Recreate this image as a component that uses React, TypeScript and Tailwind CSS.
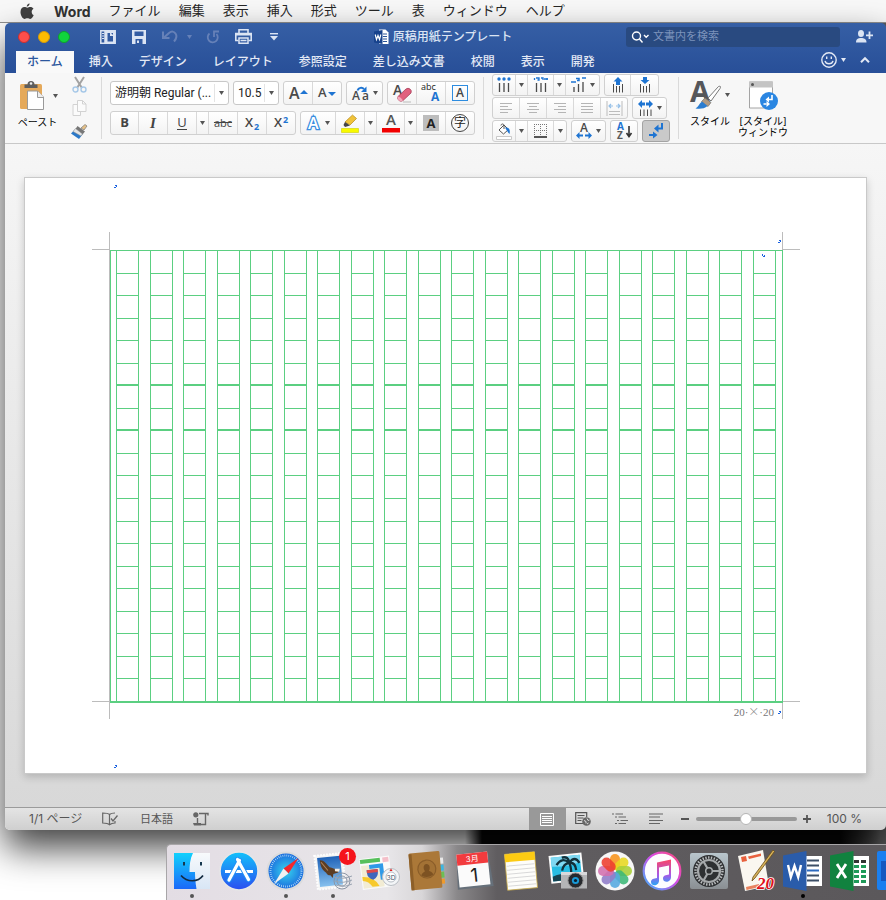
import React from "react";

type Kids = { children?: React.ReactNode };

function Svg({ w, h, className = "", children }: { w: number; h: number; className?: string } & Kids) {
  return (
    <svg width={w} height={h} viewBox={`0 0 ${w} ${h}`} className={`block shrink-0 overflow-visible ${className}`} fill="none" aria-hidden="true">
      {children}
    </svg>
  );
}

function Caret({ className = "text-[#555]" }: { className?: string }) {
  return (
    <Svg w={5} h={4} className={className}>
      <path d="M0 0h5L2.500 4z" fill="currentColor" />
    </Svg>
  );
}

function Letter({ x, y, size, fill = "#4a4a4a", weight = 600, children }: { x: number; y: number; size: number; fill?: string; weight?: number } & Kids) {
  return (
    <text x={x} y={y} fontSize={size} fontWeight={weight} fontFamily="Open Sans, sans-serif" fill={fill}>
      {children}
    </text>
  );
}

/* ---------- menu bar ---------- */

const menus = ["ファイル", "編集", "表示", "挿入", "形式", "ツール", "表", "ウィンドウ", "ヘルプ"];

function MenuBar() {
  return (
    <nav className="flex h-[23px] shrink-0 items-center border-b border-[#8f8f8f] bg-[#f8f8f8] pl-[20px] text-[13px] text-[#262626]">
      <button aria-label="Apple">
        <Svg w={14} h={17}>
          <path d="M9.600 0.600C9.700 2 8.500 3.700 6.800 3.800 6.600 2.300 8 .800 9.600.600zM11.700 8.700c0-1.500.900-2.400 1.800-3C12.800 4.600 11.600 4.100 10.400 4.100c-1.300 0-2.200.700-3 .700-.900 0-1.800-.700-2.900-.700C2.300 4.100.500 6 .500 9c0 3.300 2.200 7 4.100 7 .900 0 1.500-.700 2.800-.700s1.700.700 2.800.700c1.600 0 3-2.300 3.500-3.900-1.200-.500-2-1.700-2-3.400z" fill="#404040" />
        </Svg>
      </button>
      <button className="ml-[20px] text-[14px] font-bold text-[#333]">Word</button>
      <div className="ml-[18px] flex gap-[18px]">
        {menus.map((m) => (
          <button key={m} className="whitespace-nowrap">{m}</button>
        ))}
      </div>
    </nav>
  );
}

/* ---------- title bar ---------- */

function TitleBar() {
  return (
    <div className="flex h-[27px] items-center pl-[13px] pr-[13px] text-[#dbe4f3]">
      <div className="flex gap-[8px]">
        <button aria-label="閉じる" className="size-[12px] rounded-full border border-[#c93030] bg-[#fd4e4b]" />
        <button aria-label="しまう" className="size-[12px] rounded-full border border-[#d49a0b] bg-[#fdbc02]" />
        <button aria-label="拡大" className="size-[12px] rounded-full border border-[#0fa02c] bg-[#10d43c]" />
      </div>
      <div className="ml-[30px] flex items-center">
        <button aria-label="サイドバー">
          <Svg w={16} h={14}>
            <path d="M.800.800h14.400v12.400H.800zM5 1v12" stroke="currentColor" strokeWidth="1.500" />
            <path d="M2 3.500h2M2 6h2M2 8.500h2" stroke="currentColor" />
            <path d="M5 1h2.500v12H5zM7 1h8v2H7zM13 3h2v10h-2zM7 11.500h8V13H7z" fill="currentColor" />
            <path d="M10 2v4h4z" fill="currentColor" />
          </Svg>
        </button>
        <button aria-label="保存" className="ml-[16px]">
          <Svg w={14} h={14}>
            <path d="M0 0h14v14H0zM2.500 1.500v4.500h9V1.500zM3.500 9v5h7V9z" fill="currentColor" fillRule="evenodd" />
            <path d="M5 10.500h2v2.500H5z" fill="currentColor" />
          </Svg>
        </button>
        <button aria-label="元に戻す" className="ml-[16px] flex items-center gap-[9px] text-[#6681b8]">
          <Svg w={16} h={13}>
            <path d="M1 1.500v6.500h6.500" stroke="currentColor" strokeWidth="2" />
            <path d="M2 7.500 7 3q4-3 6.500.500t-1.500 8" stroke="currentColor" strokeWidth="2" />
          </Svg>
          <Caret className="text-[#6681b8]" />
        </button>
        <button aria-label="やり直し" className="ml-[14px] text-[#6681b8]">
          <Svg w={14} h={14}>
            <path d="M3.500 3.500A5 5 0 1 0 10.500 4" stroke="currentColor" strokeWidth="1.800" />
            <path d="M8 7V1.500h5" stroke="currentColor" strokeWidth="1.800" />
          </Svg>
        </button>
        <button aria-label="印刷" className="ml-[15px]">
          <Svg w={17} h={15}>
            <path d="M4 4V.800h9V4M3.500 11.500H.800V4.500h15.400v7h-2.700" stroke="currentColor" strokeWidth="1.600" />
            <path d="M4 9h9v5.200H4zM5.500 11.500h6" stroke="currentColor" strokeWidth="1.500" />
            <path d="M1 5.500h15" stroke="currentColor" strokeWidth="2" />
          </Svg>
        </button>
        <button aria-label="ツールバーのカスタマイズ" className="ml-[18px]">
          <Svg w={8} h={8}>
            <path d="M0 .700h8" stroke="currentColor" strokeWidth="1.400" />
            <path d="M0 3h8L4 7.500z" fill="currentColor" />
          </Svg>
        </button>
      </div>
      <div className="flex min-w-0 flex-1 items-center justify-center gap-[4px] pr-[18px]">
        <Svg w={15} h={16}>
          <path d="M5 .500h6.500l3 3V15H5z" fill="#fff" />
          <path d="M9 5h4M9 7.500h4M9 10h4M9 12.500h4" stroke="#2a5599" />
          <path d="M0 2.500 8.500 1v14L0 13.500z" fill="#17428c" />
          <path d="m1.200 5.500 1.300 5 1.500-4 1.500 4 1.300-5" stroke="#fff" strokeWidth="1.200" />
        </Svg>
        <h1 className="whitespace-nowrap text-[12px] font-medium">原稿用紙テンプレート</h1>
      </div>
      <label className="mr-[16px] flex h-[20px] w-[214px] items-center gap-[4px] rounded-[3px] bg-[#294a80] px-[5px]">
        <Svg w={18} h={12}>
          <circle cx="5.500" cy="5" r="4" stroke="#fff" strokeWidth="1.400" />
          <path d="m8.500 8 3 3.500M13 4l2.200 2.200L17.500 4" stroke="#fff" strokeWidth="1.400" />
        </Svg>
        <input aria-label="文書内を検索" placeholder="文書内を検索" className="min-w-0 flex-1 bg-transparent text-[11px] outline-none placeholder:text-[#7d93bb]" />
      </label>
      <button aria-label="共有">
        <Svg w={17} h={13}>
          <ellipse cx="5" cy="3.500" rx="3" ry="3.500" fill="currentColor" />
          <path d="M0 12.500C0 9 2 8 5 8s5.500 1 5.500 4.500z" fill="currentColor" />
          <path d="M13.500 1.500v7.500M10 5.300h7" stroke="currentColor" strokeWidth="1.800" />
        </Svg>
      </button>
    </div>
  );
}

const tabs = ["挿入", "デザイン", "レイアウト", "参照設定", "差し込み文書", "校閲", "表示", "開発"];

function Tabs() {
  return (
    <div className="flex h-[23px] items-end pl-[11px] pr-[16px] text-[12px] font-medium text-[#e3e9f5]">
      <button className="mr-[2px] h-[22px] whitespace-nowrap bg-[#f9f9f9] px-[11px] text-[#2c579d]">ホーム</button>
      {tabs.map((t) => (
        <button key={t} className="h-[22px] whitespace-nowrap px-[13px]">{t}</button>
      ))}
      <div className="ml-auto flex h-full items-center gap-[14px] pb-[4px]">
        <button aria-label="フィードバック" className="flex items-center gap-[4px]">
          <Svg w={16} h={16}>
            <circle cx="8" cy="8" r="7.200" stroke="currentColor" strokeWidth="1.400" />
            <path d="M5.700 4.500v2.500M10.300 4.500v2.500M4 8.800c1 4 7 4 8 0" stroke="currentColor" strokeWidth="1.400" />
          </Svg>
          <Caret className="text-[#e3e9f5]" />
        </button>
        <button aria-label="リボンを折りたたむ">
          <Svg w={10} h={6}>
            <path d="m1 5.200 4-4 4 4" stroke="currentColor" strokeWidth="2" />
          </Svg>
        </button>
      </div>
    </div>
  );
}

/* ---------- ribbon ---------- */

function Group({ children, className = "h-[24px]" }: { className?: string } & Kids) {
  return (
    <div className={`flex shrink-0 divide-x divide-[#d9d9d9] rounded-[3px] border border-[#d0d0d0] bg-linear-to-b from-white to-[#f3f3f3] ${className}`}>
      {children}
    </div>
  );
}

function Btn({ label, w, children }: { label: string; w: string } & Kids) {
  return (
    <button aria-label={label} className={`flex h-full shrink-0 items-center justify-center gap-[4px] ${w}`}>
      {children}
    </button>
  );
}

function Drop() {
  return (
    <Btn label="オプション" w="w-[12px]">
      <Caret />
    </Btn>
  );
}

function Combo({ label, value, w }: { label: string; value: string; w: string }) {
  return (
    <div className={`relative h-[24px] shrink-0 rounded-[3px] border border-[#c8c8c8] bg-white ${w}`}>
      <select aria-label={label} className="block h-[22px] w-full appearance-none whitespace-nowrap bg-transparent pl-[4px] font-['Roboto','Noto_Sans_CJK_JP',sans-serif] text-[12px] leading-[22px] text-[#222] outline-none">
        <option>{value}</option>
      </select>
      <span className="pointer-events-none absolute inset-y-[2px] right-0 flex w-[14px] items-center justify-center border-l border-[#e4e4e4]">
        <Caret />
      </span>
    </div>
  );
}

function Rule() {
  return <div className="h-[62px] w-px shrink-0 bg-[#dadada]" />;
}

function Clipboard() {
  return (
    <div className="flex shrink-0">
      <div className="w-[46px]">
        <button className="flex flex-col gap-[4px] pt-[3px]">
          <span className="flex items-center gap-[8px] pl-[3px]">
            <Svg w={25} h={31}>
              <rect x="0" y="4" width="22" height="25" rx="1.500" fill="#e5a95a" />
              <path d="M4.500 8V4.500h3a3.500 3.500 0 0 1 7 0h3V8z" fill="#5d5d5d" />
              <circle cx="11" cy="3.500" r="1.300" fill="#eee" />
              <path d="M7.500 11h10l6 6v12.500h-16z" fill="#fff" stroke="#9a9a9a" />
              <path d="M17.500 11v6.500H24" stroke="#9a9a9a" fill="#eee" />
            </Svg>
            <Caret />
          </span>
          <span className="whitespace-nowrap text-[10px] leading-[14px] text-black">ペースト</span>
        </button>
      </div>
      <div className="flex w-[32px] flex-col items-center gap-[7px]">
        <button aria-label="カット">
          <Svg w={15} h={16}>
            <path d="m3 0 7 11M12 0 5 11" stroke="#a2a2a2" strokeWidth="2" />
            <circle cx="3.500" cy="12.500" r="2.500" stroke="#a6c8e8" strokeWidth="1.400" />
            <circle cx="11.500" cy="12.500" r="2.500" stroke="#a6c8e8" strokeWidth="1.400" />
          </Svg>
        </button>
        <button aria-label="コピー">
          <Svg w={15} h={16}>
            <path d="M1 4.500h4.500L8.500 8v7.500H1z" fill="#fbfbfb" stroke="#d2d2d2" />
            <path d="M5.500.500h5l3.500 3.500v7.500H5.500z" fill="#fbfbfb" stroke="#d2d2d2" />
            <path d="M10.500.500V4H14" stroke="#d2d2d2" />
          </Svg>
        </button>
        <button aria-label="書式のコピー">
          <Svg w={16} h={16}>
            <path d="m10 5 4-3.500L16 3l-3 4z" fill="#e6c188" stroke="#777" strokeWidth=".700" />
            <path d="m6.500 3 7.500 5.500-2.500 3-7-5.500z" fill="#777" />
            <path d="m4.500 6 7 5.500L8 16 0 10.500z" fill="#2a78c8" />
            <path d="m4.500 5.500 7 5.500-1.500 2-8-4.500z" fill="#e4e4e4" stroke="#888" strokeWidth=".500" />
          </Svg>
        </button>
      </div>
    </div>
  );
}

function FontGroup() {
  return (
    <div className="flex shrink-0 flex-col gap-[6px]">
      <div className="flex gap-[4px]">
        <Combo label="フォント" value="游明朝 Regular (..." w="w-[119px]" />
        <Combo label="フォント サイズ" value="10.5" w="w-[46px]" />
        <Group>
          <Btn label="フォントの拡大" w="w-[29px]">
            <Svg w={20} h={15}>
              <Letter x={1} y={13} size={16}>A</Letter>
              <path d="M12 8h8L16 4z" fill="#1e74d2" />
            </Svg>
          </Btn>
          <Btn label="フォントの縮小" w="w-[28px]">
            <Svg w={18} h={14}>
              <Letter x={0} y={11} size={13}>A</Letter>
              <path d="M10 6h8l-4 4z" fill="#1e74d2" />
            </Svg>
          </Btn>
        </Group>
        <Group>
          <Btn label="文字種の変換" w="w-[35px]">
            <Svg w={17} h={15}>
              <Letter x={0} y={14} size={12}>A</Letter>
              <Letter x={10} y={14} size={12}>a</Letter>
              <path d="M5.500 4.500C6.500 1.500 10 1 12 3" stroke="#1e74d2" strokeWidth="2" />
              <path d="M14.500.500v5.500H9z" fill="#1e74d2" />
            </Svg>
            <Caret />
          </Btn>
        </Group>
        <Group>
          <Btn label="書式のクリア" w="w-[29px]">
            <Svg w={21} h={19}>
              <Letter x={1} y={11} size={14}>A</Letter>
              <path d="M6 12.500 14 5q2-1.500 4 0t1 4l-8 7.500q-2 1.500-4 0t-1-4z" fill="#e0607e" stroke="#a63d58" strokeWidth=".800" />
              <path d="M6 12.500q3 .500 5 4-2 1.500-4 0t-1-4z" fill="#f4a9bb" />
              <path d="M11 18h8" stroke="#bbb" />
            </Svg>
          </Btn>
          <Btn label="ルビ" w="w-[29px]">
            <Svg w={20} h={20}>
              <Letter x={0} y={7} size={9} fill="#222" weight={400}>abc</Letter>
              <Letter x={10} y={18} size={12} fill="#1e74d2" weight={700}>A</Letter>
            </Svg>
          </Btn>
          <Btn label="囲み線" w="w-[28px]">
            <span className="flex size-[16px] items-center justify-center border border-[#2d8ce0] font-['Open_Sans',sans-serif] text-[12px] font-semibold leading-[14px] text-[#444]">A</span>
          </Btn>
        </Group>
      </div>
      <div className="flex gap-[4px] font-['Open_Sans','Noto_Sans_CJK_JP',sans-serif] text-[13px] text-[#444]">
        <Group>
          <Btn label="太字" w="w-[28px]"><b className="font-bold">B</b></Btn>
          <Btn label="斜体" w="w-[29px]"><i className="font-['Liberation_Serif',serif] text-[15px] font-bold">I</i></Btn>
          <Btn label="下線" w="w-[29px]"><span className="border-b border-[#444] leading-[13px]">U</span></Btn>
          <Drop />
          <Btn label="取り消し線" w="w-[29px]"><s className="text-[11px]">abc</s></Btn>
          <Btn label="下付き" w="w-[29px]"><span className="font-semibold">X<sub className="pl-px text-[9px] font-bold text-[#1e74d2]">2</sub></span></Btn>
          <Btn label="上付き" w="w-[28px]"><span className="font-semibold">X<sup className="pl-px text-[9px] font-bold text-[#1e74d2]">2</sup></span></Btn>
        </Group>
        <Group>
          <Btn label="文字の効果" w="w-[35px]">
            <Svg w={15} h={16}>
              <text x="2" y="13.500" fontSize="16" fontWeight="600" fontFamily="Open Sans, sans-serif" fill="#fff" stroke="#3a8ee0" strokeWidth="2.600" paintOrder="stroke">A</text>
            </Svg>
            <Caret />
          </Btn>
          <Btn label="蛍光ペン" w="w-[29px]">
            <Svg w={18} h={19}>
              <path d="M4 8 11.500 1l4 3.500L9 11z" fill="#f0c33a" stroke="#b58a1a" strokeWidth=".700" />
              <path d="m4 8 5 3.500L4 13 2.500 11z" fill="#444" />
              <path d="M.500 14.500h17v4H.500z" fill="#f8fa00" stroke="#d0d000" strokeWidth=".600" />
            </Svg>
          </Btn>
          <Drop />
          <Btn label="フォントの色" w="w-[28px]">
            <Svg w={18} h={19}>
              <Letter x={4} y={11} size={15} fill="#555">A</Letter>
              <path d="M0 14h18v4.500H0z" fill="#f20000" />
            </Svg>
          </Btn>
          <Drop />
          <Btn label="網かけ" w="w-[29px]">
            <span className="flex size-[16px] items-center justify-center bg-[#bdbdbd] text-[13px] font-bold leading-[16px] text-[#222]">A</span>
          </Btn>
          <Btn label="囲い文字" w="w-[28px]">
            <span className="flex size-[18px] items-center justify-center rounded-full border border-[#444] text-[12px] leading-[16px] text-[#222]">字</span>
          </Btn>
        </Group>
      </div>
    </div>
  );
}

function ListIcon({ top }: { top: React.ReactNode }) {
  return (
    <Svg w={14} h={16}>
      {top}
      <path d="M2.500 6v9M7 6v9M11.500 6v9" stroke="#4a4a4a" strokeWidth="1.300" />
    </Svg>
  );
}

function Lines({ d }: { d: string }) {
  return (
    <Svg w={12} h={12}>
      <path d={d} stroke="#b5b5b5" />
    </Svg>
  );
}

function IndentIcon({ down = false }: { down?: boolean }) {
  return (
    <Svg w={12} h={16}>
      <path d={down ? "M6 7 1.500 3H4V0h4v3h2.500z" : "M6 0 1.500 4.500H4V8h4V4.500h2.500z"} fill="#1e74d2" />
      <path d="M1.500 7v8.500M4.500 9v6.500M7.500 9v6.500M10.500 7v8.500" stroke="#4a4a4a" />
    </Svg>
  );
}

function ParagraphGroup() {
  return (
    <div className="flex shrink-0 flex-col gap-px">
      <div className="flex gap-[4px]">
        <Group className="h-[22px]">
          <Btn label="箇条書き" w="w-[23px]">
            <ListIcon
              top={
                <g fill="#1e74d2">
                  <circle cx="2" cy="2" r="1.700" />
                  <circle cx="7" cy="2" r="1.700" />
                  <circle cx="12" cy="2" r="1.700" />
                </g>
              }
            />
          </Btn>
          <Drop />
          <Btn label="段落番号" w="w-[26px]">
            <ListIcon top={<path d="M.500 3V1M2 1h3v2H3.500M7 1h2v2M10 2h4M13 1v2" stroke="#1e74d2" strokeWidth="1.300" />} />
          </Btn>
          <Drop />
          <Btn label="アウトライン" w="w-[33px]">
            <Svg w={15} h={16}>
              <path d="M0 5h5M5 1.500h3v2H6M11 1h4" stroke="#1e74d2" strokeWidth="1.500" />
              <path d="M3 10v5M7.500 7v8M12 5v10" stroke="#4a4a4a" strokeWidth="1.300" />
            </Svg>
            <Caret />
          </Btn>
        </Group>
        <Group className="h-[22px]">
          <Btn label="インデントを減らす" w="w-[26px]"><IndentIcon /></Btn>
          <Btn label="インデントを増やす" w="w-[27px]"><IndentIcon down /></Btn>
        </Group>
      </div>
      <div className="flex gap-[4px]">
        <Group className="h-[22px]">
          <Btn label="左揃え" w="w-[27px]"><Lines d="M0 1.500h12M0 4.500h8M0 7.500h12M0 10.500h8" /></Btn>
          <Btn label="中央揃え" w="w-[27px]"><Lines d="M0 1.500h12M2 4.500h8M0 7.500h12M2 10.500h8" /></Btn>
          <Btn label="右揃え" w="w-[27px]"><Lines d="M0 1.500h12M4 4.500h8M0 7.500h12M4 10.500h8" /></Btn>
          <Btn label="両端揃え" w="w-[27px]"><Lines d="M0 1.500h12M0 4.500h12M0 7.500h12M0 10.500h12" /></Btn>
          <Btn label="均等割り付け" w="w-[26px]">
            <Svg w={17} h={15}>
              <path d="M1 0v15M16 0v15M3 10.500h11M3 13.500h11" stroke="#bcbcbc" />
              <path d="M3 5h4M10 5h4M5 3 3 5l2 2M12 3l2 2-2 2" stroke="#94bfe8" strokeWidth="1.200" />
            </Svg>
          </Btn>
        </Group>
        <Group className="h-[22px]">
          <Btn label="行間" w="w-[33px]">
            <Svg w={15} h={17}>
              <path d="m0 4 4-4v2.500h3v3H4V8zM15 4l-4-4v2.500H8v3h3V8z" fill="#1e74d2" />
              <path d="M2.500 9.500V16M6 9.500V16M9.500 9.500V16M13 9.500V16" stroke="#4a4a4a" />
            </Svg>
            <Caret />
          </Btn>
        </Group>
      </div>
      <div className="flex gap-[4px]">
        <Group className="h-[22px]">
          <Btn label="網かけの色" w="w-[23px]">
            <Svg w={16} h={17}>
              <path d="m3 7 5-5 4.500 4.500-5 4.500z" fill="#fff" stroke="#555" />
              <path d="M5 2.500c0-2 3-2 3 0V6" stroke="#555" />
              <path d="M9 4.500c4-.500 5.500 2 4.500 6.500-1.500-1-2-3-3-4z" fill="#1e74d2" />
              <path d="M.500 13.500h15v3H.500z" fill="#fff" stroke="#c9c9c9" />
            </Svg>
          </Btn>
          <Drop />
          <Btn label="罫線" w="w-[26px]">
            <Svg w={13} h={14}>
              <path d="M.500 0v12M6.500 0v12M12.500 0v12M0 .500h13M0 6.500h13" stroke="#777" strokeDasharray="1 1" />
              <path d="M0 13h13" stroke="#111" strokeWidth="1.400" />
            </Svg>
          </Btn>
          <Drop />
        </Group>
        <Group className="h-[22px]">
          <Btn label="拡張書式" w="w-[33px]">
            <Svg w={16} h={16}>
              <Letter x={4} y={9} size={12}>A</Letter>
              <path d="m0 12.500 3.500-3.500v2.500H7v2H3.500V16zM16 12.500 12.500 9v2.500H9v2h3.500V16z" fill="#1e74d2" />
            </Svg>
            <Caret />
          </Btn>
        </Group>
        <Group className="h-[22px]">
          <Btn label="並べ替え" w="w-[26px]">
            <Svg w={16} h={18}>
              <Letter x={1} y={8} size={10} fill="#1e74d2" weight={700}>A</Letter>
              <Letter x={1} y={17} size={10} fill="#5a5a5a" weight={700}>Z</Letter>
              <path d="M13 4v9M10.500 11 13 14.500 15.500 11" stroke="#333" strokeWidth="1.600" />
            </Svg>
          </Btn>
        </Group>
        <button aria-label="編集記号の表示" className="flex h-[22px] w-[28px] items-center justify-center rounded-[3px] border border-[#a3a3a3] bg-[#c9c9c9]">
          <Svg w={14} h={16}>
            <path d="M13 0v5.500H9" stroke="#1e74d2" strokeWidth="2" />
            <path d="M9.500 1.500v8L5 5.500z" fill="#1e74d2" />
            <path d="M0 12h4" stroke="#1e74d2" strokeWidth="2" />
            <path d="M4 8.500v7L8.500 12z" fill="#1e74d2" />
          </Svg>
        </button>
      </div>
    </div>
  );
}

function StylesGroup() {
  return (
    <div className="flex shrink-0 gap-[8px] pt-[3px] text-[10px] leading-[11px] text-black">
      <button className="flex w-[40px] flex-col items-start gap-[6px]">
        <span className="flex items-center gap-[2px]">
          <Svg w={33} h={30}>
            <Letter x={0} y={22} size={29} weight={700} fill="#55565a">A</Letter>
            <path d="M18 18 28.500 6.500q3-1 1.500 2L21 21z" fill="#fff" stroke="#777" />
            <path d="m15 18 6 4.500-3 4-6.500-5z" fill="#b09a82" stroke="#777" strokeWidth=".700" />
            <path d="M12 21.500 17.500 26c-3 3-8 3-12 2.500 3-1.500 3.500-5 6.500-7z" fill="#2a7cd0" />
          </Svg>
          <Caret />
        </span>
        <span className="whitespace-nowrap">スタイル</span>
      </button>
      <button className="flex w-[50px] flex-col items-center gap-[6px]">
        <Svg w={31} h={30}>
          <path d="M1.500 2h23v26h-23z" fill="#fff" stroke="#a4a4a4" />
          <path d="M1 1.500h24v6H1z" fill="#c4c4c4" />
          <circle cx="4.500" cy="4.500" r="1.500" fill="#555" />
          <circle cx="21" cy="21" r="9" fill="#2a86e2" />
          <path d="M24 15v4.500h-3.500M15.500 24h3" stroke="#fff" strokeWidth="1.600" />
          <path d="M21 16.500v6l-3.500-3zM18.500 21v6l3.500-3z" fill="#fff" />
        </Svg>
        <span className="whitespace-nowrap text-center">[スタイル]<br />ウィンドウ</span>
      </button>
    </div>
  );
}

function Ribbon() {
  return (
    <div className="flex h-[71px] items-center border-b border-[#c8c8c8] bg-[#f7f7f7] pl-[12px]">
      <div className="flex h-[62px] shrink-0 items-start"><Clipboard /></div>
      <div className="ml-[6px] flex items-center gap-[8px]">
        <Rule />
        <FontGroup />
        <Rule />
        <ParagraphGroup />
        <Rule />
      </div>
      <div className="ml-[11px] flex h-[62px] items-start"><StylesGroup /></div>
    </div>
  );
}

/* ---------- document ---------- */

function Mark({ down = false }: { down?: boolean }) {
  return (
    <Svg w={3} h={3}>
      <path d={down ? "M0 0h1v2H0zM1 2h2v1H1zM2 1h1v1H2z" : "M1 0h2v2H2V1H1zM0 2h2v1H0z"} fill="#1b62e0" />
    </Svg>
  );
}

const twenty = Array.from({ length: 20 }, (_, i) => i);

function Manuscript() {
  return (
    <div className="relative">
      <span className="absolute -left-px -top-[18px] h-[487px] w-px bg-[#bcbcbc]" />
      <span className="absolute -left-[18px] -top-px h-px w-[17px] bg-[#bcbcbc]" />
      <span className="absolute -bottom-[16px] right-0 h-[487px] w-px bg-[#bcbcbc]" />
      <span className="absolute -right-[17px] -top-px h-px w-[17px] bg-[#bcbcbc]" />
      <span className="absolute -left-[18px] bottom-px h-px w-[17px] bg-[#bcbcbc]" />
      <span className="absolute -right-[17px] bottom-px h-px w-[17px] bg-[#bcbcbc]" />
      <span className="absolute -top-[10px] right-[2px]"><Mark /></span>
      <div className="relative flex h-[453px] items-start justify-between border-x border-t border-[#5bcf81] pl-[5px] pr-[6px]">
        {twenty.map((c) => (
          <div key={c} className="h-[451px] w-[23px] border-x border-[#5bcf81]">
            {twenty.map((r) => (
              <div
                key={r}
                className={`h-[5%] border-[#5bcf81] ${r === 19 ? "" : r === 5 || r === 7 ? "border-b-2" : "border-b"}`}
              />
            ))}
          </div>
        ))}
      </div>
      <div className="relative -mt-[2px] h-[2px] bg-[#5bcf81]" />
      <span className="absolute right-[18px] top-[4px]"><Mark down /></span>
    </div>
  );
}

function DocumentArea() {
  return (
    <main className="flex-1 bg-linear-to-b from-[#f6f6f6] to-[#d8d8d8] px-[19px] py-[33px]">
      <article className="border border-[#c9c9c9] bg-white pl-[85px] pr-[83px] shadow-[0_3px_8px_rgba(0,0,0,0.18)]">
        <header className="h-[72px] pl-[4px] pt-[7px]"><Mark /></header>
        <Manuscript />
        <footer className="flex h-[70px] flex-col justify-between pb-[5px]">
          <div className="flex items-center justify-end gap-[4px] pr-[2px] text-[#777]">
            <span className="font-['Liberation_Serif','Noto_Sans_CJK_JP',serif] text-[11px] leading-[17px]">
              20·<span className="font-['Noto_Sans_CJK_JP',sans-serif] font-light">×</span>·20
            </span>
            <Mark />
          </div>
          <div className="pl-[4px]"><Mark /></div>
        </footer>
      </article>
    </main>
  );
}

/* ---------- status bar ---------- */

function StatusBar() {
  return (
    <div className="flex h-[23px] shrink-0 items-center border-t border-[#9b9b9b] bg-linear-to-b from-[#e4e4e4] to-[#cfcfcf] pl-[24px] pr-[24px] text-[12px] text-[#555]">
      <button className="w-[73px] whitespace-nowrap text-left">1/1 ページ</button>
      <button aria-label="校正">
        <Svg w={16} h={14}>
          <path d="M7.500 2.500C6 1 3 1 .700 1v10c2.500 0 5 0 6.800 1.800C9 11.500 10 11 13 11V9M7.500 2.500v10M7.500 2.500C8.500 1.500 10 1 13 1" stroke="#666" strokeWidth="1.200" />
          <path d="M9 6.500 11 9l4.500-5.500" stroke="#666" strokeWidth="1.300" />
        </Svg>
      </button>
      <button className="ml-[22px] whitespace-nowrap text-[11px]">日本語</button>
      <button aria-label="マクロ" className="ml-[20px]">
        <Svg w={16} h={14}>
          <circle cx="2.800" cy="2.800" r="2.600" fill="#666" />
          <path d="M6 1.500h9v2M12.500 2v10.500H8M4.500 6v6" stroke="#666" strokeWidth="1.400" />
          <path d="M0 11h8v2.500H1z" fill="#666" />
        </Svg>
      </button>
      <div className="ml-auto flex h-full items-center">
        <button aria-label="印刷レイアウト" className="flex h-full w-[37px] items-center justify-center bg-[#999]">
          <Svg w={14} h={13}>
            <path d="M.500.500h13v12H.500z" stroke="#fff" />
            <path d="M2 3.500h10M2 5.500h10M2 7.500h10M2 9.500h10" stroke="#fff" />
          </Svg>
        </button>
        <button aria-label="Web レイアウト" className="flex w-[35px] justify-center">
          <Svg w={16} h={14}>
            <path d="M8 11.500H.700V.700h11V5M2.500 3.500h7M2.500 6h6M2.500 8.500h4" stroke="#555" strokeWidth="1.200" />
            <circle cx="11.500" cy="9.500" r="4.300" fill="#666" />
            <path d="m9 8.500 2 1v2M12 6.500l1 2 1.500-.500M13.500 11l-1.500 1" stroke="#ddd" />
          </Svg>
        </button>
        <button aria-label="アウトライン" className="flex w-[38px] justify-center">
          <Svg w={16} h={12}>
            <path d="M0 1h2M3.500 1H11M3 4h2M6.500 4H14M5 7.500h2M8.500 7.500H16M3 10.500h2M6.500 10.500H14" stroke="#666" strokeWidth="1.200" />
          </Svg>
        </button>
        <button aria-label="下書き" className="flex w-[34px] justify-center">
          <Svg w={14} h={12}>
            <path d="M0 1h14M0 4h11M0 7.500h14M0 10.500h11" stroke="#666" strokeWidth="1.200" />
          </Svg>
        </button>
        <button aria-label="縮小" className="ml-[8px] h-[2px] w-[8px] bg-[#555]" />
        <input
          type="range"
          aria-label="ズーム"
          min={0}
          max={200}
          defaultValue={100}
          className="ml-[7px] h-[12px] w-[101px] appearance-none bg-transparent [&::-webkit-slider-runnable-track]:h-[4px] [&::-webkit-slider-runnable-track]:rounded-full [&::-webkit-slider-runnable-track]:bg-[#999] [&::-webkit-slider-thumb]:-mt-[4px] [&::-webkit-slider-thumb]:size-[12px] [&::-webkit-slider-thumb]:appearance-none [&::-webkit-slider-thumb]:rounded-full [&::-webkit-slider-thumb]:border [&::-webkit-slider-thumb]:border-[#b5b5b5] [&::-webkit-slider-thumb]:bg-white"
        />
        <button aria-label="拡大" className="ml-[6px]">
          <Svg w={8} h={8}><path d="M0 4h8M4 0v8" stroke="#555" strokeWidth="1.800" /></Svg>
        </button>
        <span className="ml-[16px] whitespace-nowrap">100 %</span>
      </div>
    </div>
  );
}

/* ---------- dock ---------- */

const petals = [
  ["#f7941d", 0], ["#e8d820", 45], ["#a8cf38", 90], ["#3cb878", 135],
  ["#54a8e0", 180], ["#8f7cc8", 225], ["#d36fae", 270], ["#ee3e2d", 315],
] as const;

function Finder() {
  return (
    <Svg w={40} h={40}>
      <defs>
        <linearGradient id="fd" x1="0" y1="0" x2="0" y2="1"><stop stopColor="#12d1fd" /><stop offset="1" stopColor="#1b68f8" /></linearGradient>
        <linearGradient id="fl" x1="0" y1="0" x2="0" y2="1"><stop stopColor="#f8fafc" /><stop offset="1" stopColor="#d8e6f5" /></linearGradient>
      </defs>
      <path d="M2 2h36v36H2z" fill="url(#fl)" />
      <path d="M2 2h19c-3 6-3.500 12-3.500 19H23c0 6 .500 11 1.500 17H2z" fill="url(#fd)" />
      <path d="M12 11v3.500M29 11v3.500" stroke="#16384f" strokeWidth="2" />
      <path d="M9 24.500c6 7 17 7 22 0" stroke="#122b40" strokeWidth="1.700" />
    </Svg>
  );
}

function AppStore() {
  return (
    <Svg w={40} h={40}>
      <defs><linearGradient id="as" x1="0" y1="0" x2="0" y2="1"><stop stopColor="#12c2fb" /><stop offset="1" stopColor="#2b4df0" /></linearGradient></defs>
      <circle cx="20" cy="20" r="19" fill="url(#as)" stroke="#e6e6e6" strokeWidth="1.600" />
      <path d="M6 20.500h28" stroke="#fff" strokeWidth="3.200" />
      <path d="M10 29 20.500 9.500M18.500 8.500l11 20" stroke="#2290f5" strokeWidth="5" strokeLinecap="round" />
      <path d="M10 29 20.500 9.500M18.500 8.500l11 20" stroke="#fff" strokeWidth="3.200" strokeLinecap="round" />
    </Svg>
  );
}

function Safari() {
  return (
    <Svg w={40} h={40}>
      <defs><radialGradient id="sf"><stop stopColor="#37d5ee" /><stop offset="1" stopColor="#1a68dd" /></radialGradient></defs>
      <circle cx="20" cy="20" r="18.500" fill="url(#sf)" stroke="#dcdcdc" strokeWidth="2" />
      <circle cx="20" cy="20" r="15.500" stroke="#bfe3fa" strokeWidth="2" strokeDasharray=".700 1.330" />
      <path d="M32.500 7 22.500 22.500l-5-5z" fill="#f4262b" />
      <path d="m8 33 9.500-15.500 5 5z" fill="#f1f1f1" />
    </Svg>
  );
}

function Mail() {
  return (
    <Svg w={40} h={40}>
      <defs><linearGradient id="ml" x1="0" y1="0" x2="0" y2="1"><stop stopColor="#1f62b8" /><stop offset="1" stopColor="#86c0ee" /></linearGradient></defs>
      <g transform="rotate(-6 20 20)">
        <path d="M3 3h28v34H3z" fill="#f4f4f4" stroke="#fff" strokeDasharray="1.500 1.500" strokeWidth="2" />
        <path d="M5.500 5.500h23v29h-23z" fill="url(#ml)" />
        <path d="M8 8c4 0 6 4 9 8 3 1 5 3 9 3l-1 3-5 1-1 4-2-3c-2 0-3-1-4-3-4-3-5-8-5-12z" fill="#5c3d24" />
        <path d="m22 18 5 .500-1 3-4-1z" fill="#f5efe5" />
        <path d="m9 10 6 9" stroke="#b7895a" />
      </g>
      <circle cx="29" cy="30" r="8" stroke="#8c96a5" />
      <circle cx="29" cy="30" r="5" stroke="#8c96a5" />
      <path d="M21 26q8 3 18-1M22 30q8 3 17-1M23 34q8 3 16-1" stroke="#9aa4b2" />
    </Svg>
  );
}

function Maps() {
  return (
    <Svg w={40} h={40}>
      <g transform="rotate(-7 18 22)">
        <path d="M1 6h30v31H1z" fill="#fafafa" />
        <path d="M1.500 7h20v4h-20z" fill="#57c05b" />
        <path d="M24 7h6v5h-6z" fill="#f4bfc9" />
        <path d="M2 13h21v23H2z" fill="#f2ecd4" />
        <path d="M10 13h14v16h-4V17H10z" fill="#2f9ae8" />
        <path d="M2 24q12 1 16 11h-7Q8 29 2 28z" fill="#f7c92c" />
        <path d="M7 18h11v3q0 5-5.500 7Q7 26 7 21z" fill="#3f67bd" />
        <path d="M7 18h11v3H7z" fill="#dd4a4a" />
      </g>
      <circle cx="31" cy="26" r="8.500" fill="#f3f5f7" stroke="#b9bec4" />
      <circle cx="31" cy="26" r="5" fill="#fff" stroke="#b6bcc4" />
      <text x="31" y="28.500" textAnchor="middle" fontSize="6.500" fill="#456">3D</text>
      <path d="m31 17.500 1.500 2.500h-3z" fill="#d22" />
    </Svg>
  );
}

function Contacts() {
  return (
    <Svg w={40} h={40}>
      <g transform="rotate(-5 20 20)">
        <path d="M31 8h6v6h-6z" fill="#e8e8e8" /><path d="M31 15h6v6h-6z" fill="#3fb6e0" />
        <path d="M31 22h6v6h-6z" fill="#6cbf55" /><path d="M31 29h6v5h-6z" fill="#ef9a2b" />
        <rect x="3" y="1" width="31" height="37" rx="1.500" fill="#ab7838" />
        <path d="M3 2h3v36H3z" fill="#8d5f28" />
        <circle cx="20" cy="18" r="9" stroke="#8a5d29" strokeWidth="1.200" fill="#a37235" />
        <path d="M14 24c1-3 3-3 4-4-2-3-1-7 2-7s4 4 2 7c1 1 3 1 4 4q-6 4-12 0z" fill="#7d5222" />
      </g>
    </Svg>
  );
}

function Calendar() {
  return (
    <Svg w={40} h={40}>
      <g transform="rotate(-6 20 20)">
        <path d="M4 5 2 37h36L36 5z" fill="#66707a" />
        <path d="M4 2h31v33H4z" fill="#fbfbfb" />
        <path d="M4 2h31v11H4z" fill="#f23b3e" />
        <text x="19.500" y="10.500" textAnchor="middle" fontSize="8" fill="#fff">3月</text>
        <text x="20" y="31" textAnchor="middle" fontSize="19" fill="#222">1</text>
      </g>
    </Svg>
  );
}

function Notes() {
  return (
    <Svg w={40} h={40}>
      <g transform="rotate(-5 20 20)">
        <path d="M5 2h30v36H5z" fill="#fdfdfa" stroke="#c9ac48" strokeWidth=".800" />
        <path d="M5 2h30v8H5z" fill="#fccb13" />
        <path d="M6 14h28M6 18h28M6 22h28M6 26h28M6 30h28M6 34h28" stroke="#d9d9d9" />
      </g>
    </Svg>
  );
}

function IPhoto() {
  return (
    <Svg w={40} h={40}>
      <g transform="rotate(-6 20 18)">
        <path d="M2 3h33v28H2z" fill="#fafafa" />
        <path d="M4 5h29v24H4z" fill="#28bde3" />
        <path d="M4 5h29v7q-10 4-29 2z" fill="#7fd8f2" />
        <path d="M4 24q12-4 29 0v5H4z" fill="#15414f" />
        <path d="M22 12q2 7 0 15M22 12Q15 5 9 13M22 12q-6 0-8 7M22 12q0-7-7-6M22 12q6-7 10 1M22 12q6 0 6 8" stroke="#12303a" strokeWidth="2.300" />
      </g>
      <path d="M13 21h26v16.500H13z" fill="#b4b5b7" />
      <path d="M13 21h26v3H13z" fill="#d9d9db" />
      <circle cx="27.500" cy="29.500" r="7.500" fill="#26292d" stroke="#888" />
      <circle cx="27.500" cy="29.500" r="3.600" fill="#1899d6" />
      <circle cx="27.500" cy="29.500" r="1.600" fill="#0b2030" />
    </Svg>
  );
}

function Photos() {
  return (
    <Svg w={40} h={40}>
      <circle cx="20" cy="20" r="19.500" fill="#f7f7f7" />
      {petals.map(([c, a]) => (
        <rect key={c} x="15" y="3" width="10" height="16" rx="5" fill={c} fillOpacity=".880" transform={`rotate(${a} 20 20)`} />
      ))}
    </Svg>
  );
}

function ITunes() {
  return (
    <Svg w={40} h={40}>
      <defs>
        <linearGradient id="it" x1="1" y1="0" x2="0" y2="1"><stop stopColor="#fb4a72" /><stop offset=".450" stopColor="#d64ce8" /><stop offset="1" stopColor="#37b6fb" /></linearGradient>
        <linearGradient id="nt" x1="0" y1="0" x2="0" y2="1"><stop stopColor="#fb4565" /><stop offset=".600" stopColor="#a757e8" /><stop offset="1" stopColor="#2aa5f5" /></linearGradient>
      </defs>
      <circle cx="20" cy="20" r="18.300" fill="#fdfdff" stroke="url(#it)" strokeWidth="2.200" />
      <path d="M15 11.500 29 8.500v17.500c0 6-8 6-8 1.500 0-3 3-3.500 6-4V14.500l-10 2v13c0 6-8 6-8 1.500 0-3 3-3.500 6-4z" fill="url(#nt)" />
    </Svg>
  );
}

function Settings() {
  return (
    <Svg w={40} h={40}>
      <defs><linearGradient id="st" x1="0" y1="0" x2="0" y2="1"><stop stopColor="#b9c6cd" /><stop offset="1" stopColor="#8a8f93" /></linearGradient></defs>
      <rect x="1" y="2" width="38" height="36" rx="2" fill="url(#st)" />
      <circle cx="20" cy="20" r="16" fill="#2e3032" />
      <circle cx="20" cy="20" r="13.500" stroke="#b9bcbe" strokeWidth="2.500" strokeDasharray="1.400 1.430" />
      <circle cx="20" cy="20" r="11" stroke="#a5a8aa" strokeWidth="2.200" />
      <path d="M20 20 14.500 10.500M20 20h11M20 20l-5.500 9.500" stroke="#a5a8aa" strokeWidth="2.200" />
      <circle cx="20" cy="20" r="3.300" fill="#2e3032" stroke="#a5a8aa" strokeWidth="1.500" />
    </Svg>
  );
}

function Manuscript20() {
  return (
    <Svg w={40} h={42}>
      <path d="M2 6 27 0l6 36-24 5z" fill="#faf7f0" />
      <path d="m5 7 5-1 1 5-5 1zM12 6.500l13-3v2.500l-12 3z" fill="#e8613e" />
      <path d="m10 37 13-3 .500 3-13 3z" fill="#e8825e" />
      <path d="m37 0 1.500 1.500L19 28l-3 3 1-4z" fill="#d7b35a" stroke="#6b4c18" strokeWidth=".800" />
      <text x="21" y="39" fontSize="17" fontStyle="italic" fontWeight="700" fontFamily="Liberation Serif, serif" fill="#e0101a" stroke="#fff" strokeWidth="1.500" paintOrder="stroke">20</text>
    </Svg>
  );
}

function WordApp() {
  return (
    <Svg w={40} h={40}>
      <path d="M20 5h19v30H20z" fill="#fff" />
      <path d="M24 9.500h12M24 14.500h12M24 24.500h12M24 29.500h12" stroke="#3c4e66" strokeWidth="2" />
      <path d="M24 19.500h12" stroke="#2d6bc0" strokeWidth="2" />
      <path d="M0 4.500 23.500 0v40L0 35.500z" fill="#2a5caa" />
      <path d="m5 14 2.800 12L11.500 15l3.700 11L18 14" stroke="#fff" strokeWidth="2.400" />
    </Svg>
  );
}

function ExcelApp() {
  return (
    <Svg w={40} h={40}>
      <path d="M20 5h19v30H20z" fill="#fff" />
      <path d="M24 9h5v3h-5zM31 9h5v3h-5z" fill="#333" />
      <path d="M24 14h5v3h-5zM31 14h5v3h-5zM24 19h5v3h-5zM31 19h5v3h-5zM24 24h5v3h-5zM31 24h5v3h-5zM24 29h5v3h-5zM31 29h5v3h-5z" fill="#1e9a58" />
      <path d="M0 4.500 23.500 0v40L0 35.500z" fill="#11823f" />
      <path d="m7 13 9 14M16 13 7 27" stroke="#fff" strokeWidth="2.800" />
    </Svg>
  );
}

function OutlookApp() {
  return (
    <Svg w={40} h={40}>
      <rect x="0" y="0" width="40" height="39" rx="2" fill="#1a7ff0" />
      <path d="M4 10h32v20H4z" fill="#1558c0" />
    </Svg>
  );
}

const apps: { name: string; icon: React.ReactNode; dot?: string; badge?: string }[] = [
  { name: "Finder", icon: <Finder />, dot: "bg-[#555]" },
  { name: "App Store", icon: <AppStore /> },
  { name: "Safari", icon: <Safari />, dot: "bg-[#555]" },
  { name: "メール", icon: <Mail />, dot: "bg-[#555]", badge: "1" },
  { name: "マップ", icon: <Maps /> },
  { name: "連絡先", icon: <Contacts /> },
  { name: "カレンダー", icon: <Calendar /> },
  { name: "メモ", icon: <Notes /> },
  { name: "iPhoto", icon: <IPhoto /> },
  { name: "写真", icon: <Photos /> },
  { name: "iTunes", icon: <ITunes /> },
  { name: "システム環境設定", icon: <Settings /> },
  { name: "原稿用紙", icon: <Manuscript20 /> },
  { name: "Word", icon: <WordApp />, dot: "bg-black" },
  { name: "Excel", icon: <ExcelApp /> },
  { name: "Outlook", icon: <OutlookApp /> },
];

function Dock() {
  return (
    <div className="relative ml-[166px] mt-[14px] flex h-[56px] shrink-0 overflow-hidden rounded-tl-[5px] border-l border-t border-[#a8a6a8] bg-[linear-gradient(to_right,#e3dde4_0,#e8e6e9_220px,#d8d6d8_255px,#8a888a_290px,#605d60_330px,#5b585b_100%)] pl-px">
      {apps.map((a) => (
        <button key={a.name} aria-label={a.name} className="relative flex h-full w-[47px] shrink-0 flex-col items-center pt-[5px]">
          <span className="flex h-[42px] items-center">{a.icon}</span>
          {a.badge && (
            <span className="absolute right-0 top-[3px] flex size-[17px] items-center justify-center rounded-full bg-[#f5141c] text-[11px] leading-[17px] text-white">
              {a.badge}
            </span>
          )}
          {a.dot && <span className={`mt-[2px] size-[4px] rounded-full ${a.dot}`} />}
        </button>
      ))}
    </div>
  );
}

export default function App() {
  return (
    <div className="flex min-h-screen flex-col overflow-hidden bg-[linear-gradient(to_right,#ffffff_465px,#070707_482px,#070707_840px,#5a5a5a_880px)] font-['Inter','Noto_Sans_CJK_JP',sans-serif]">
      <MenuBar />
      <div className="ml-[5px] flex flex-1 flex-col rounded-[5px] shadow-[0_18px_36px_rgba(0,0,0,0.75)]">
        <div className="rounded-t-[5px] bg-linear-to-b from-[#365fa5] to-[#284f98]">
          <TitleBar />
          <Tabs />
        </div>
        <Ribbon />
        <DocumentArea />
        <div className="overflow-hidden rounded-b-[5px]">
          <StatusBar />
        </div>
      </div>
      <Dock />
    </div>
  );
}
